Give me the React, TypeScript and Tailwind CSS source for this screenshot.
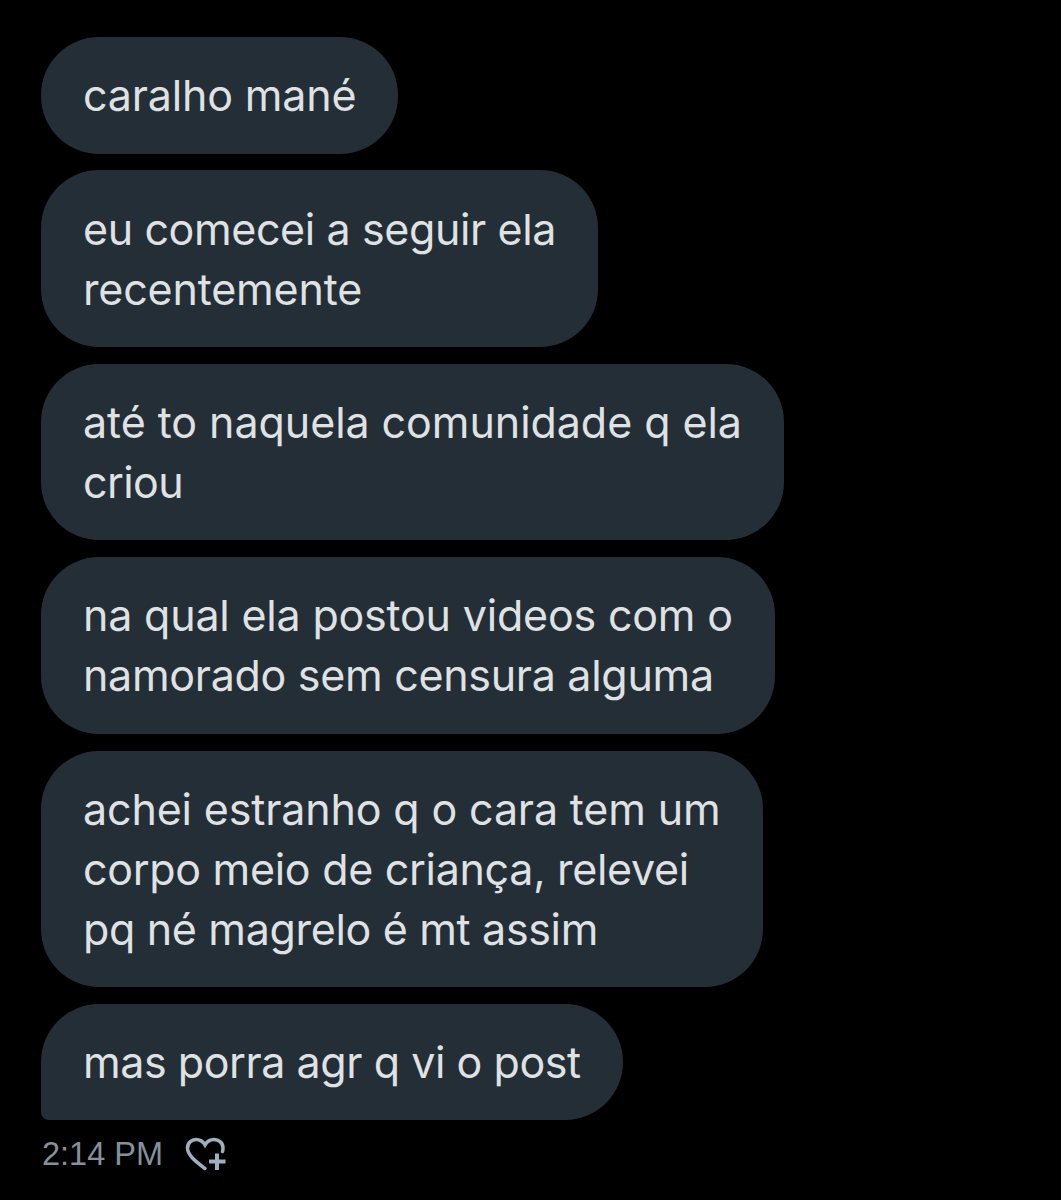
type Line = { text: string; tracking: string };

const messages: Line[][] = [
  [{ text: "caralho mané", tracking: "tracking-[-0.17px]" }],
  [
    { text: "eu comecei a seguir ela", tracking: "tracking-[-0.39px]" },
    { text: "recentemente", tracking: "tracking-[-0.17px]" },
  ],
  [
    { text: "até to naquela comunidade q ela", tracking: "tracking-[-0.06px]" },
    { text: "criou", tracking: "tracking-[-0.6px]" },
  ],
  [
    { text: "na qual ela postou videos com o", tracking: "tracking-[-0.2px]" },
    { text: "namorado sem censura alguma", tracking: "tracking-[-0.3px]" },
  ],
  [
    { text: "achei estranho q o cara tem um", tracking: "tracking-[-0.15px]" },
    { text: "corpo meio de criança, relevei", tracking: "tracking-[-0.3px]" },
    { text: "pq né magrelo é mt assim", tracking: "tracking-[-0.33px]" },
  ],
  [{ text: "mas porra agr q vi o post", tracking: "tracking-[-0.44px]" }],
];

function HeartPlus() {
  return (
    <svg width="41" height="34" viewBox="0 0 41 34" fill="none" stroke="#9db0bd">
      <path
        d="M20 31.500 C13 26 2.500 19 2.500 11 C2.500 6 6.500 2.500 11 2.500 C15 2.500 18 4.500 20 8 C22 4.500 25 2.500 29 2.500 C34 2.500 38 6 38 11 C38 12 37.800 13.500 37.500 14.500"
        strokeWidth="3.500"
        strokeLinecap="round"
      />
      <path d="M32 16.500 V33 M24 24.500 H40.500" strokeWidth="4" />
    </svg>
  );
}

export default function App() {
  return (
    <div className="w-[1061px] h-[1200px] overflow-hidden bg-black pl-[41px] pt-[37px] font-['Inter',sans-serif]">
      <div className="flex flex-col items-start gap-[16.900px]">
        {messages.map((lines, i) => (
          <div
            key={i}
            className={`bg-[#242e36] rounded-[58px] px-[42px] py-[28.250px] text-[43px] leading-[60px] text-[#dfe1e3] whitespace-nowrap ${
              i === messages.length - 1 ? "rounded-bl-[8px]" : ""
            }`}
          >
            {lines.map((line) => (
              <div key={line.text} className={line.tracking}>
                {line.text}
              </div>
            ))}
          </div>
        ))}
      </div>
      <div className="flex items-center mt-[14.500px] gap-[22px] pl-[1px]">
        <span className="text-[32.500px] leading-[38px] text-[#84919b] font-['Liberation_Sans',sans-serif]">2:14 PM</span>
        <HeartPlus />
      </div>
    </div>
  );
}
